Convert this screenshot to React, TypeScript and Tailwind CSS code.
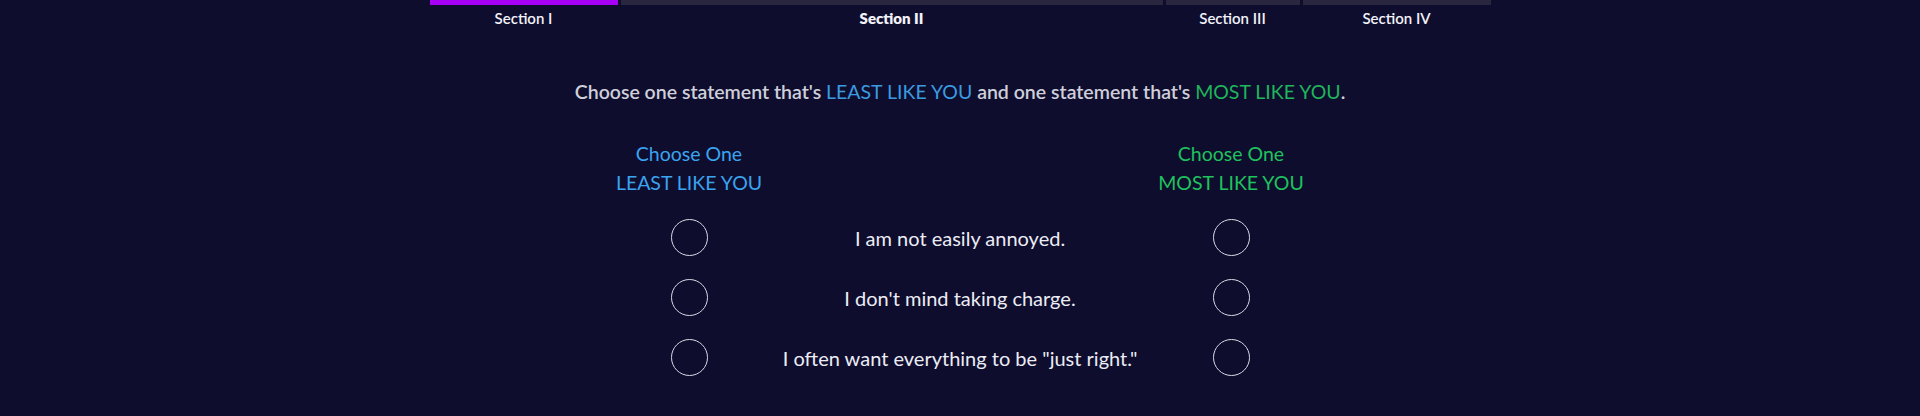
const sections = [
    { label: "Section I", width: "w-[188px]", active: true, current: false },
    { label: "Section II", width: "w-[542px]", active: false, current: true },
    { label: "Section III", width: "w-[134px]", active: false, current: false },
    { label: "Section IV", width: "w-[188px]", active: false, current: false },
]

const statements = [
    "I am not easily annoyed.",
    "I don't mind taking charge.",
    'I often want everything to be "just right."',
]

const Radio = () => (
    <button className="w-[37px] h-[37px] rounded-full border border-[#d8d8e4] bg-transparent cursor-pointer" />
)

const App = () => {
    return (
        <div className="w-full h-[416px] bg-[#0e0d2e] text-white font-['Lato','Open_Sans',sans-serif]">
            <div className="flex justify-center gap-[3px]">
                {sections.map((s) => (
                    <div key={s.label} className={`${s.width} flex flex-col items-center`}>
                        <div className={`w-full h-[5px] ${s.active ? `bg-[#a800f5]` : `bg-[#29273f]`}`} />
                        <span className={`mt-[4px] text-[15px] leading-[18px] text-[#f2f2f8] ${s.current ? `font-extrabold` : `font-semibold`}`}>{s.label}</span>
                    </div>
                ))}
            </div>

            <p className="mt-[53px] text-center text-[19.5px] leading-[24px] font-semibold text-[#cfcfdb]">
                Choose one statement that's <span className="text-[#3b9be0] font-normal">LEAST LIKE YOU</span> and one statement that's <span className="text-[#1fb55a] font-normal">MOST LIKE YOU</span>.
            </p>

            <div className="mt-[35px] grid grid-cols-[142px_400px_142px] justify-center">
                <div className="flex flex-col items-center whitespace-nowrap text-[#3aa4f0] text-[19.5px] leading-[29px]">
                    <span>Choose One</span>
                    <span>LEAST LIKE YOU</span>
                </div>
                <div />
                <div className="flex flex-col items-center whitespace-nowrap text-[#1fc25c] text-[19.5px] leading-[29px]">
                    <span>Choose One</span>
                    <span>MOST LIKE YOU</span>
                </div>
            </div>

            <div className="mt-[22px] flex flex-col gap-[23px]">
                {statements.map((text) => (
                    <div key={text} className="grid grid-cols-[142px_400px_142px] justify-center items-center">
                        <div className="flex justify-center"><Radio /></div>
                        <span className="text-center whitespace-nowrap text-[20px] leading-[24px] text-[#ececf4]">{text}</span>
                        <div className="flex justify-center"><Radio /></div>
                    </div>
                ))}
            </div>
        </div>
    )
}

export default App
